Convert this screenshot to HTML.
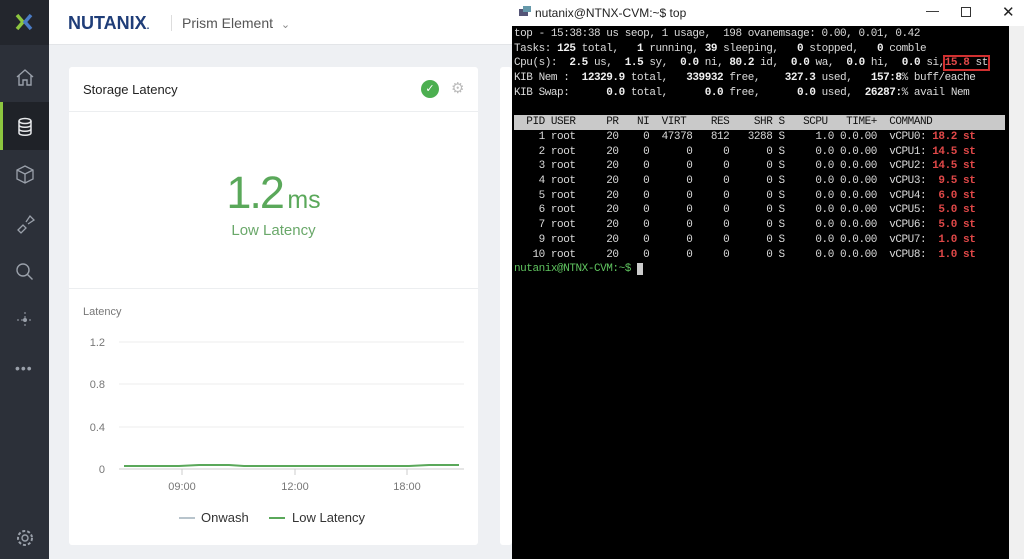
<!DOCTYPE html>
<html><head><meta charset="utf-8"><style>
*{margin:0;padding:0;box-sizing:border-box}
body{width:1024px;height:559px;overflow:hidden;background:#eef0f3;font-family:"Liberation Sans",sans-serif;position:relative}
.side{position:absolute;left:0;top:0;width:49px;height:559px;background:#2c3039}
.side .logo{height:45px;background:#23262d}
.act{position:absolute;left:0;top:102px;width:49px;height:48px;background:#1f2228;border-left:3px solid #8dc63f}
.ico{position:absolute;left:14px}
.hdr{position:absolute;left:49px;top:0;width:463px;height:45px;background:#fff;border-bottom:1px solid #e3e5e8}
.card{position:absolute;background:#fff;border-radius:3px}
.term{position:absolute;left:512px;top:0;width:512px;height:559px;background:#000}
.tb{position:absolute;left:0;top:0;width:512px;height:26px;background:#fff;font-size:12px;color:#222}
pre{position:absolute;left:2px;top:27px;font-family:"Liberation Mono","DejaVu Sans Mono",monospace;font-size:11px;letter-spacing:-0.45px;line-height:14.7px;color:#dadada}
.r{color:#e04848;font-weight:bold}
.g{color:#5fc35f}
b{color:#f0f0f0;font-weight:bold}
.hl{background:#c9c9c9;color:#111;display:inline-block;width:491px}
</style></head><body>
<div class="side">
<div class="logo"><svg width="49" height="45"><path d="M17 15l6 7-6 7" stroke="#8dc63f" stroke-width="3.5" fill="none"/><path d="M31 15l-6 7 6 7" stroke="#4a7bc4" stroke-width="3.5" fill="none"/></svg></div>
<svg class="ico" style="top:67px" width="22" height="20"><path d="M3 10L11 3l8 7M5 8v10h4v-5h4v5h4V8" stroke="#9aa0aa" stroke-width="1.4" fill="none"/></svg>
<div class="act"></div>
<svg class="ico" style="top:117px" width="22" height="20"><ellipse cx="11" cy="4" rx="6" ry="2.5" stroke="#e6e8ea" stroke-width="1.5" fill="none"/><path d="M5 4v12c0 3 12 3 12 0V4M5 8c0 3 12 3 12 0M5 12c0 3 12 3 12 0" stroke="#e6e8ea" stroke-width="1.5" fill="none"/></svg>
<svg class="ico" style="top:164px" width="22" height="20"><path d="M11 2l8 4v9l-8 4-8-4V6zM3 6l8 4 8-4M11 10v9" stroke="#9aa0aa" stroke-width="1.3" fill="none"/></svg>
<svg class="ico" style="top:212px" width="22" height="22"><path d="M4 18l5-5 3 3-5 5zM12 10l4-6 4 4-6 4" stroke="#9aa0aa" stroke-width="1.3" fill="none"/></svg>
<svg class="ico" style="top:261px" width="22" height="22"><circle cx="9" cy="9" r="6" stroke="#9aa0aa" stroke-width="1.4" fill="none"/><path d="M13.5 13.5l5 5" stroke="#9aa0aa" stroke-width="1.4"/></svg>
<svg class="ico" style="top:309px" width="22" height="22"><path d="M11 3v16M3 11h16" stroke="#9aa0aa" stroke-width="1" stroke-dasharray="2 2"/><circle cx="11" cy="11" r="2" fill="#9aa0aa"/></svg>
<div style="position:absolute;left:15px;top:360px;color:#9aa0aa;font-size:14px;letter-spacing:1px">•••</div>
<svg class="ico" style="top:527px" width="22" height="22"><circle cx="11" cy="11" r="3" stroke="#9aa0aa" stroke-width="1.4" fill="none"/><circle cx="11" cy="11" r="7" stroke="#9aa0aa" stroke-width="2" fill="none" stroke-dasharray="3 2"/></svg>
</div>
<div class="hdr">
<div style="position:absolute;left:19px;top:13px;font-size:18px;font-weight:bold;color:#1f3d78;letter-spacing:0px">NUTANIX<span style="font-size:10px">.</span></div>
<div style="position:absolute;left:122px;top:15px;width:1px;height:16px;background:#ddd"></div>
<div style="position:absolute;left:133px;top:15px;font-size:14px;color:#555">Prism Element <span style="font-size:11px;color:#888;margin-left:4px">&#8964;</span></div>
</div>
<div class="card" style="left:69px;top:67px;width:409px;height:478px">
<div style="position:absolute;left:14px;top:15px;font-size:13px;color:#222">Storage Latency</div>
<div style="position:absolute;left:352px;top:13px;width:18px;height:18px;border-radius:50%;background:#4caf50;color:#fff;font-size:11px;text-align:center;line-height:18px">✓</div>
<div style="position:absolute;left:382px;top:12px;font-size:15px;color:#bbb">⚙</div>
<div style="position:absolute;left:0;top:44px;width:409px;height:1px;background:#eceef0"></div>
<div style="position:absolute;left:0;top:100px;width:409px;text-align:center;color:#5aa85a"><span style="font-size:45px;letter-spacing:-2px">1.2</span> <span style="font-size:25px">ms</span></div>
<div style="position:absolute;left:0;top:155px;width:409px;text-align:center;color:#6aa86a;font-size:15px">Low Latency</div>
<div style="position:absolute;left:0;top:221px;width:409px;height:1px;background:#eceef0"></div>
<div style="position:absolute;left:14px;top:239px;font-size:11px;color:#777">Latency</div>
<svg style="position:absolute;left:0;top:260px" width="409" height="218">
<g font-family="Liberation Sans" font-size="11" fill="#777" text-anchor="end">
<text x="36" y="19">1.2</text><text x="36" y="61">0.8</text><text x="36" y="104">0.4</text><text x="36" y="146">0</text></g>
<g stroke="#ececec"><line x1="50" y1="15" x2="395" y2="15"/><line x1="50" y1="57" x2="395" y2="57"/><line x1="50" y1="100" x2="395" y2="100"/></g>
<line x1="50" y1="142" x2="395" y2="142" stroke="#ccc"/>
<g stroke="#ccc"><line x1="113" y1="142" x2="113" y2="148"/><line x1="226" y1="142" x2="226" y2="148"/><line x1="338" y1="142" x2="338" y2="148"/></g>
<path d="M55 139 L110 139 L130 138 L160 138 L175 139 L340 139 L360 138 L390 138" stroke="#5aa85a" stroke-width="2" fill="none"/>
<g font-family="Liberation Sans" font-size="11" fill="#777" text-anchor="middle"><text x="113" y="163">09:00</text><text x="226" y="163">12:00</text><text x="338" y="163">18:00</text></g>
<line x1="110" y1="191" x2="126" y2="191" stroke="#b8c4cc" stroke-width="2"/>
<text x="132" y="195" font-family="Liberation Sans" font-size="13" fill="#333">Onwash</text>
<line x1="200" y1="191" x2="216" y2="191" stroke="#5aa85a" stroke-width="2"/>
<text x="223" y="195" font-family="Liberation Sans" font-size="13" fill="#333">Low Latency</text>
</svg>
</div>
<div class="card" style="left:500px;top:67px;width:12px;height:478px"></div>
<div class="term">
<div class="tb">
<svg style="position:absolute;left:6px;top:5px" width="14" height="14"><rect x="1" y="4" width="9" height="7" fill="#557"/><rect x="5" y="1" width="8" height="6" fill="#69a"/></svg>
<div style="position:absolute;left:23px;top:6px">nutanix@NTNX-CVM:~$ top</div>
<div style="position:absolute;left:414px;top:3px;font-size:13px">&#8212;</div>
<div style="position:absolute;left:449px;top:7px;width:10px;height:10px;border:1px solid #333"></div>
<div style="position:absolute;left:490px;top:3px;font-size:15px">✕</div>
</div>
<div style="position:absolute;left:497px;top:26px;width:15px;height:533px;background:#f0f0f0"></div>
<pre>top - 15:38:38 us seop, 1 usage,  198 ovanemsage: 0.00, 0.01, 0.42
Tasks: <b>125</b> total,   <b>1</b> running, <b>39</b> sleeping,   <b>0</b> stopped,   <b>0</b> comble
Cpu(s):  <b>2.5</b> us,  <b>1.5</b> sy,  <b>0.0</b> ni, <b>80.2</b> id,  <b>0.0</b> wa,  <b>0.0</b> hi,  <b>0.0</b> si,<span style="outline:2px solid #d03030;outline-offset:0"><span class="r">15.8</span> st</span>
KIB Nem :  <b>12329.9</b> total,   <b>339932</b> free,    <b>327.3</b> used,   <b>157:8</b>% buff/eache
KIB Swap:      <b>0.0</b> total,      <b>0.0</b> free,      <b>0.0</b> used,  <b>26287:</b>% avail Nem

<span class="hl">  PID USER     PR   NI  VIRT    RES    SHR S   SCPU   TIME+  COMMAND</span>
    1 root     20    0  47378   812   3288 S     1.0 0.0.00  vCPU0: <span class="r">18.2 st</span>
    2 root     20    0      0     0      0 S     0.0 0.0.00  vCPU1: <span class="r">14.5 st</span>
    3 root     20    0      0     0      0 S     0.0 0.0.00  vCPU2: <span class="r">14.5 st</span>
    4 root     20    0      0     0      0 S     0.0 0.0.00  vCPU3: <span class="r"> 9.5 st</span>
    5 root     20    0      0     0      0 S     0.0 0.0.00  vCPU4: <span class="r"> 6.0 st</span>
    6 root     20    0      0     0      0 S     0.0 0.0.00  vCPU5: <span class="r"> 5.0 st</span>
    7 root     20    0      0     0      0 S     0.0 0.0.00  vCPU6: <span class="r"> 5.0 st</span>
    9 root     20    0      0     0      0 S     0.0 0.0.00  vCPU7: <span class="r"> 1.0 st</span>
   10 root     20    0      0     0      0 S     0.0 0.0.00  vCPU8: <span class="r"> 1.0 st</span>
<span class="g">nutanix@NTNX-CVM:~$</span> <span style="background:#ccc">&nbsp;</span></pre>
</div>
</body></html>
